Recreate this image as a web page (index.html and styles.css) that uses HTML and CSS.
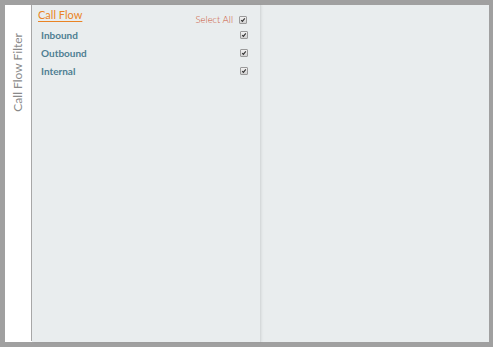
FILE: index.html
```html
<!DOCTYPE html>
<html>
<head>
<meta charset="utf-8">
<link rel="stylesheet" href="styles.css">
</head>
<body>
<div class="frame">
  <div class="sidebar"><span class="sidebar-label">Call Flow Filter</span></div>
  <div class="content">
    <div class="panel panel-left">
      <div class="header-row">
        <a class="title">Call Flow</a>
        <div class="select-all">
          <span class="select-label">Select All</span>
          <span class="check"><svg viewBox="0 0 8 8" width="8" height="8"><path d="M1.6 4.2 L3.2 5.9 L6.4 1.9" fill="none" stroke="#333" stroke-width="1.5"/></svg></span>
        </div>
      </div>
      <div class="item"><span class="item-label">Inbound</span><span class="check"><svg viewBox="0 0 8 8" width="8" height="8"><path d="M1.6 4.2 L3.2 5.9 L6.4 1.9" fill="none" stroke="#333" stroke-width="1.5"/></svg></span></div>
      <div class="item"><span class="item-label">Outbound</span><span class="check"><svg viewBox="0 0 8 8" width="8" height="8"><path d="M1.6 4.2 L3.2 5.9 L6.4 1.9" fill="none" stroke="#333" stroke-width="1.5"/></svg></span></div>
      <div class="item"><span class="item-label">Internal</span><span class="check"><svg viewBox="0 0 8 8" width="8" height="8"><path d="M1.6 4.2 L3.2 5.9 L6.4 1.9" fill="none" stroke="#333" stroke-width="1.5"/></svg></span></div>
    </div>
    <div class="panel panel-right"></div>
  </div>
</div>
</body>
</html>
```

FILE: styles.css
```css
html, body {
  margin: 0;
  padding: 0;
  background: #ffffff;
}
body {
  font-family: Lato, "Liberation Sans", sans-serif;
}
.frame {
  box-sizing: border-box;
  width: 493px;
  height: 347px;
  border: 5px solid #a0a0a0;
  border-right-width: 4px;
  display: flex;
}
.sidebar {
  width: 26px;
  background: #ffffff;
  border-right: 1px solid #a8a8a8;
  display: flex;
  justify-content: center;
  align-items: flex-start;
  margin-bottom: 1px;
}
.sidebar-label {
  writing-mode: vertical-rl;
  transform: rotate(180deg);
  font-size: 12px;
  color: #8a8a8a;
  margin-top: 28px;
  white-space: nowrap;
  line-height: 14px;
}
.content {
  flex: 1;
  display: flex;
  background: #e9edee;
}
.panel-left {
  width: 229px;
  border-right: 1px solid #d6dadb;
  box-shadow: 1px 0 2px rgba(0, 0, 0, 0.06);
  padding: 0 13px 0 6px;
  box-sizing: border-box;
}
.panel-right {
  flex: 1;
}
.header-row {
  height: 21px;
  display: flex;
  justify-content: space-between;
  align-items: flex-start;
}
.title {
  font-size: 11px;
  line-height: 14px;
  margin-top: 3px;
  color: #ea8424;
  text-decoration: underline;
  text-underline-offset: 2px;
}
.select-all {
  display: flex;
  align-items: center;
  margin-top: 10px;
  gap: 6px;
}
.select-label {
  font-size: 9.5px;
  line-height: 10px;
  color: #cc5535;
  font-weight: 300;
}
.check {
  box-sizing: border-box;
  width: 8px;
  height: 8px;
  border: 1px solid #9a9a9a;
  border-radius: 1px;
  background: linear-gradient(#f2f2f2, #d2d2d2);
  display: flex;
  align-items: center;
  justify-content: center;
}
.check svg {
  width: 6px;
  height: 6px;
  flex: none;
}
.item {
  height: 18px;
  display: flex;
  justify-content: space-between;
  align-items: center;
  padding-left: 3px;
  margin-right: -1px;
}
.item-label {
  font-size: 10px;
  font-weight: 700;
  color: #4f7f92;
}
```
